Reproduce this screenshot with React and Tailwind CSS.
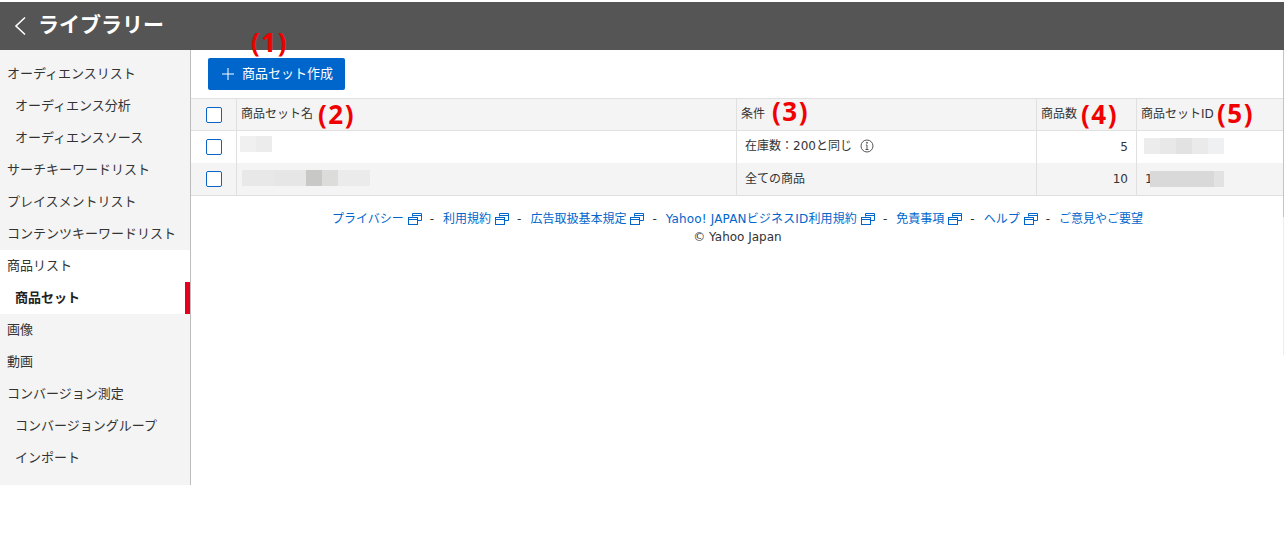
const FONT = "font-['DejaVu_Sans','Noto_Sans_CJK_JP',sans-serif]";

const NAV = [
  { label: "オーディエンスリスト" },
  { label: "オーディエンス分析", sub: true },
  { label: "オーディエンスソース", sub: true },
  { label: "サーチキーワードリスト" },
  { label: "プレイスメントリスト" },
  { label: "コンテンツキーワードリスト" },
  { label: "商品リスト", white: true },
  { label: "商品セット", sub: true, white: true, active: true },
  { label: "画像" },
  { label: "動画" },
  { label: "コンバージョン測定" },
  { label: "コンバージョングループ", sub: true },
  { label: "インポート", sub: true },
];

const LINKS = ["プライバシー", "利用規約", "広告取扱基本規定", "Yahoo! JAPANビジネスID利用規約", "免責事項", "ヘルプ", "ご意見やご要望"];

function Mark({ children, className }) {
  return (
    <span className={`absolute font-['Noto_Sans','Noto_Sans_CJK_JP',sans-serif] text-[26px] leading-[28px] font-bold tracking-[1.5px] text-[#f00000] ${className}`}>
      {children}
    </span>
  );
}

function Check() {
  return <span className="block h-4 w-4 rounded-[2px] border border-[#0d63c6] bg-white" />;
}

function Blur({ cells }) {
  return (
    <div className="relative flex h-4">
      {cells.map(([w, c], i) => (
        <div key={i} className={w} style={{ backgroundColor: c }} />
      ))}
    </div>
  );
}

function External() {
  return (
    <svg width="14" height="12" viewBox="0 0 14 12" fill="none" stroke="#0066cc" strokeWidth="1" className="ml-1 inline-block">
      <path d="M4.5 3.5V.5h9v7h-4" />
      <rect x="0.5" y="4.5" width="9" height="7" />
      <path d="M0.5 6.5h9M4.5 2.5h9" />
    </svg>
  );
}

export default function App() {
  return (
    <div className={`${FONT} h-[549px] w-[1284px] overflow-hidden bg-white pt-[2px] text-[13px] text-[#333]`}>
      <header className="flex h-[48px] items-center bg-[#555555] pl-[14px] text-white">
        <svg width="12" height="20" viewBox="0 0 12 20" fill="none" stroke="white" strokeWidth="1.6">
          <path d="M11 1.5 2 10l9 8.5" />
        </svg>
        <h1 className="ml-[12px] pb-[2px] text-[21px] leading-none font-bold">ライブラリー</h1>
      </header>
      <div className="flex items-start">
        <nav className="h-[435px] w-[191px] shrink-0 border-r border-[#bdbdbd] bg-[#f4f4f4] pt-[8px]">
          {NAV.map((n) => (
            <div
              key={n.label}
              className={`relative flex h-[32px] items-center pb-[1px] ${n.sub ? "pl-[15px]" : "pl-[7px]"} ${n.white ? "bg-white" : ""} ${n.active ? "font-bold text-[#222]" : ""}`}
            >
              {n.label}
              {n.active && <span className="absolute top-0 right-0 h-[32px] w-[5px] bg-[#e60020]" />}
            </div>
          ))}
        </nav>
        <main className="relative h-[435px] w-[1093px]">
          <span className="absolute top-0 right-0 h-[167px] w-[1px] bg-[#c4c4c4]" />
          <span className="absolute top-[167px] right-0 h-[138px] w-[1px] bg-[#ededed]" />
          <Mark className="top-[-22px] left-[60px]">(1)</Mark>
          <div className="flex h-[48px] items-start pt-[8px] pl-[17px]">
            <button className="flex h-[32px] w-[137px] items-center rounded-[2px] bg-[#0066cc] pl-[14px] text-[13px] text-white">
              <svg width="12" height="12" viewBox="0 0 12 12" stroke="white" strokeWidth="1" className="mr-[8px]">
                <path d="M6 0v12M0 6h12" />
              </svg>
              商品セット作成
            </button>
          </div>
          <div className="border-y border-[#e0e0e0] text-[12px]">
            <div className="flex h-[32px] border-b border-[#e0e0e0] bg-[#f4f4f4]">
              <div className="flex w-[46px] items-center justify-center border-r border-[#e0e0e0] pl-[1px]"><Check /></div>
              <div className="relative flex w-[500px] items-center border-r border-[#e0e0e0] pb-[1px] pl-[4px]">
                商品セット名<Mark className="top-[1px] left-[81px]">(2)</Mark>
              </div>
              <div className="relative flex w-[300px] items-center border-r border-[#e0e0e0] pb-[1px] pl-[4px]">
                条件<Mark className="top-[-2px] left-[35px]">(3)</Mark>
              </div>
              <div className="relative flex w-[100px] items-center border-r border-[#e0e0e0] pb-[1px] pl-[4px]">
                商品数<Mark className="top-[1px] left-[44px]">(4)</Mark>
              </div>
              <div className="relative flex flex-1 items-center pb-[1px] pl-[4px]">
                商品セットID<Mark className="top-[0px] left-[80px]">(5)</Mark>
              </div>
            </div>
            <div className="flex h-[32px]">
              <div className="flex w-[46px] items-center justify-center border-r border-[#e0e0e0] pl-[1px]"><Check /></div>
              <div className="w-[500px] border-r border-[#e0e0e0] pt-[5px] pl-[3px]">
                <Blur cells={[["w-4", "#f0f0f0"], ["w-4", "#ececec"]]} />
              </div>
              <div className="flex w-[300px] items-center border-r border-[#e0e0e0] pb-[3px] pl-[8px]">
                在庫数：200と同じ
                <svg width="14" height="14" viewBox="0 0 14 14" fill="none" stroke="#555" className="ml-[8px]">
                  <circle cx="7" cy="7" r="6" />
                  <path d="M7 6v4.5M5.5 10.5h3M5.8 6H7" />
                  <circle cx="7" cy="3.8" r=".5" fill="#555" />
                </svg>
              </div>
              <div className="flex w-[100px] items-center justify-end border-r border-[#e0e0e0] pr-[8px]">5</div>
              <div className="flex-1 pt-[7px] pl-[7px]">
                <Blur cells={[["w-[16px]", "#ececec"], ["w-[16px]", "#e8e8e8"], ["w-[16px]", "#e2e2e2"], ["w-[16px]", "#eaeaea"], ["w-[16px]", "#eff0f1"]]} />
              </div>
            </div>
            <div className="flex h-[32px] bg-[#f4f4f4]">
              <div className="flex w-[46px] items-center justify-center border-r border-[#e0e0e0] pl-[1px]"><Check /></div>
              <div className="w-[500px] border-r border-[#e0e0e0] pt-[7px] pl-[5px]">
                <Blur cells={[["w-8", "#e8e8e8"], ["w-8", "#e6e6e6"], ["w-[16px]", "#c8c8c6"], ["w-[16px]", "#dcdcdb"], ["w-8", "#ebebeb"]]} />
              </div>
              <div className="flex w-[300px] items-center border-r border-[#e0e0e0] pl-[8px]">全ての商品</div>
              <div className="flex w-[100px] items-center justify-end border-r border-[#e0e0e0] pr-[8px]">10</div>
              <div className="flex flex-1 items-center pl-[8px]">
                <span>1</span>
                <div className="ml-[-3px]">
                  <Blur cells={[["w-[64px]", "#d9d9d9"], ["w-[10px]", "#e2e2e2"]]} />
                </div>
              </div>
            </div>
          </div>
          <footer className="pt-[14px] text-center text-[12px] leading-[18px]">
            <div className="flex justify-center whitespace-nowrap text-[#0066cc]">
              {LINKS.map((l, i) => (
                <span key={l} className="flex items-center">
                  <a href="#" className={`flex items-center ${i === 3 ? "tracking-[0.15px]" : ""}`}>
                    {l}
                    {i < LINKS.length - 1 && <External />}
                  </a>
                  {i < LINKS.length - 1 && <span className="mr-[9px] ml-[8px] text-[#333]">-</span>}
                </span>
              ))}
            </div>
            <div>© Yahoo Japan</div>
          </footer>
        </main>
      </div>
    </div>
  );
}
